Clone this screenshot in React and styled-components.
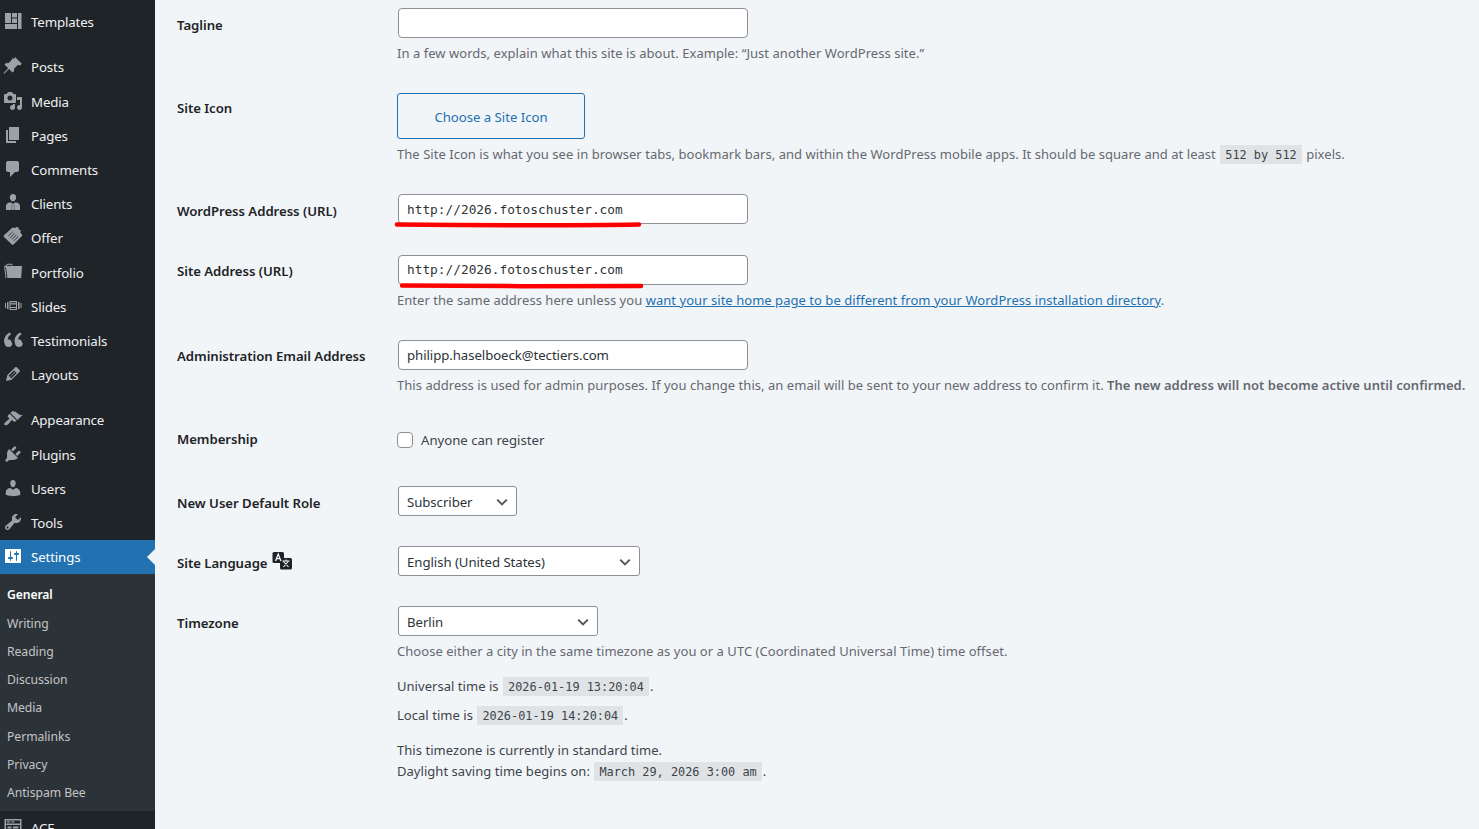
import React from "react";
import styled, { createGlobalStyle } from "styled-components";

const sans = `"Noto Sans", "Open Sans", sans-serif`;
const mono = `"DejaVu Sans Mono", "Liberation Mono", monospace`;

const Global = createGlobalStyle`
  html, body { margin: 0; padding: 0; height: 829px; overflow: hidden; background: #f2f5f8; }
  #root { height: 829px; }
  * { box-sizing: border-box; }
`;

const Page = styled.div`
  display: flex;
  height: 829px;
  overflow: hidden;
  font-family: ${sans};
  font-size: 13px;
  color: #3c434a;
  background: #f2f5f8;
`;

const Sidebar = styled.nav`
  width: 155px;
  flex: none;
  height: 829px;
  overflow: hidden;
  background: #1f2429;
  padding-top: 5px;
`;

const MenuItem = styled.div`
  display: flex;
  align-items: center;
  height: ${(p) => p.$h || 34}px;
  margin-top: ${(p) => p.$mt || 0}px;
  padding-left: 3px;
  gap: 8px;
  font-size: 13.3px;
  letter-spacing: -0.15px;
  position: relative;
  background: ${(p) => (p.$active ? "#2271b1" : "transparent")};
  color: ${(p) => (p.$active ? "#fff" : "#f0f0f1")};
`;

const IconSlot = styled.svg`
  width: 20px;
  height: 20px;
  flex: none;
  margin-bottom: 2px;
  overflow: visible;
  fill: ${(p) => p.$color || "#9ca1a7"};
`;

const Pointer = styled.span`
  position: absolute;
  right: 0;
  top: 9px;
  border: 8px solid transparent;
  border-left-width: 0;
  border-right-color: #f2f5f8;
`;

const SubMenu = styled.div`
  background: #2c3338;
  padding: 5.5px 0 3.5px;
`;

const SubItem = styled.div`
  height: ${(p) => (p.$current ? 30 : 28.3)}px;
  line-height: ${(p) => (p.$current ? 29 : 28.3)}px;
  padding-left: 7px;
  font-size: 12.2px;
  letter-spacing: ${(p) => (p.$current ? "-0.12px" : "-0.05px")};
  color: ${(p) => (p.$current ? "#fff" : "#c3c4c7")};
  font-weight: ${(p) => (p.$current ? 600 : 400)};
`;

const Main = styled.main`
  position: relative;
  flex: 1;
  padding: 8px 0 0 22px;
`;

const Row = styled.div`
  display: grid;
  grid-template-columns: 220px 1fr;
  margin-bottom: ${(p) => (p.$mb === undefined ? 30 : p.$mb)}px;
`;

const Label = styled.div`
  padding-top: ${(p) => (p.$pt === undefined ? 7 : p.$pt)}px;
  font-size: 13.2px;
  line-height: 20px;
  font-weight: 600;
  letter-spacing: -0.05px;
  color: #1d2327;
  display: flex;
  align-items: flex-start;
  gap: 4px;
  white-space: nowrap;
`;

const TextInput = styled.input`
  display: block;
  width: 350px;
  height: 30px;
  margin-left: 1px;
  padding: 0 8px ${(p) => p.$pb || 0}px;
  border: 1px solid #8c8f94;
  border-radius: 4px;
  background: #fff;
  color: #2c3338;
  outline: none;
  font-family: ${(p) => (p.$mono ? mono : sans)};
  font-size: ${(p) => (p.$mono ? "12.8px" : "13.2px")};
  letter-spacing: ${(p) => (p.$mono ? "0" : "-0.06px")};
`;

const Description = styled.p`
  margin: 5px 0 0;
  line-height: 20px;
  font-size: 13px;
  letter-spacing: 0.04px;
  color: #646970;
  white-space: nowrap;
`;

const BodyText = styled.p`
  margin: ${(p) => p.$mt || 0}px 0 0;
  line-height: 20px;
  font-size: 13px;
  letter-spacing: 0.04px;
  color: #3c434a;
  white-space: nowrap;
`;

const Strong = styled.strong`
  font-weight: 600;
`;

const Code = styled.code`
  font-family: ${mono};
  font-size: 11.88px;
  line-height: 1;
  letter-spacing: 0;
  padding: 3px 5px 2px;
  margin: 0 1px;
  background: rgba(0, 0, 0, 0.07);
  color: #3c434a;
`;

const Link = styled.a`
  color: #2271b1;
  text-decoration: underline;
`;

const IconButton = styled.button`
  display: block;
  width: 188px;
  height: 46px;
  padding: 2px 0 0;
  border: 1px solid #2271b1;
  border-radius: 3px;
  background: transparent;
  color: #2271b1;
  font-family: ${sans};
  font-size: 13.2px;
  letter-spacing: -0.03px;
`;

const CheckLine = styled.label`
  display: flex;
  align-items: center;
  gap: 8px;
  height: 20px;
  margin-top: 1px;
  font-size: 13.2px;
  letter-spacing: -0.02px;
  color: #3c434a;
`;

const Box = styled.span`
  width: 16px;
  height: 16px;
  border: 1px solid #8c8f94;
  border-radius: 4px;
  background: #fff;
`;

const SelectBox = styled.div`
  position: relative;
  width: ${(p) => p.$w}px;
  height: 30px;
  margin-left: 1px;
  padding: 0 8px;
  border: 1px solid #8c8f94;
  border-radius: 3px;
  background: #fff;
  font-size: 13.2px;
  letter-spacing: -0.05px;
  line-height: 30px;
  color: #2c3338;
`;

const Chevron = styled.svg`
  position: absolute;
  right: 8px;
  top: 9px;
  width: 12px;
  height: 12px;
  fill: none;
  stroke: #50575e;
  stroke-width: 2;
`;

const Scribble = styled.svg`
  position: absolute;
  left: ${(p) => p.$x}px;
  top: ${(p) => p.$y}px;
  overflow: visible;
  fill: none;
  stroke: #fe0000;
  stroke-width: 4.5;
  stroke-linecap: round;
`;

const TranslationSvg = styled.svg`
  width: 20px;
  height: 20px;
  margin-top: -2px;
  flex: none;
`;

const Line = styled.path`
  fill: none;
  stroke: #f2f5f8;
  stroke-width: ${(p) => p.$w};
`;

const D = {
  posts: "M10.44 3.02l1.82-1.82 6.54 6.54-1.82 1.82c-1.03-.73-1.69-.83-2.47-.19l-2.97 2.97c-.77.79-.72 1.79-.19 2.47l-1.81 1.81-3.61-3.61-3.91 3.92-1.75 1.01 1.01-1.75 3.92-3.91-3.61-3.61 1.82-1.82c.73.55 1.74.58 2.47-.19l2.97-2.97c.6-.73.5-1.44-.18-2.47z",
  media: "M13 11V4c0-.55-.45-1-1-1h-1.67L9 1H5L3.67 3H2c-.55 0-1 .45-1 1v7c0 .55.45 1 1 1h10c.55 0 1-.45 1-1zM7 4.5c1.38 0 2.5 1.12 2.5 2.5S8.38 9.5 7 9.5 4.5 8.38 4.5 7 5.62 4.5 7 4.5zM14 6h5v10.5c0 1.38-1.12 2.5-2.5 2.5S14 17.88 14 16.5s1.12-2.5 2.5-2.5c.17 0 .34.02.5.05V9h-3V6zm-4 8.05V13h2v3.5c0 1.38-1.12 2.5-2.5 2.5S7 17.88 7 16.5 8.12 14 9.5 14c.17 0 .34.02.5.05z",
  pages: "M6 15V2h10v13H6zm-1 1h8v2H3V5h2v11z",
  comments: "M5 2h9c1.1 0 2 .9 2 2v7c0 1.1-.9 2-2 2h-2l-5 5v-5H5c-1.1 0-2-.9-2-2V4c0-1.1.9-2 2-2z",
  clients: "M10 1c1.900 0 3.200 1.400 3.200 3.300 0 2-1.300 4.200-3.200 4.200S6.800 6.300 6.800 4.300C6.800 2.400 8.100 1 10 1zM7.200 9.300l1.900 1-.7 6.700H3v-4c0-2.100 2-3.300 4.200-3.700zM12.800 9.300c2.200.4 4.200 1.600 4.200 3.700v4h-5.400l-.7-6.700zM9.400 10.500h1.200l.4 1-.3.900.6 3.800-1.300 1-1.300-1 .6-3.800-.3-.9z",
  offer: "M9.500.500L12 1l1.500-1 2 .5.300 1.700 2 1.300-.5 2L19 7.500c.4.5.4 1 0 1.500l-8.500 8.500c-.5.5-1.100.5-1.600 0L1 9.900c-.5-.5-.5-1.100 0-1.600zM5.300 8.800l.4.400 4.600-4.600-.4-.4zM7 10.500l.4.400 4.600-4.600-.4-.4zM8.700 12.200l.4.400 4.600-4.600-.4-.4zM10.400 13.900l.4.400 4.600-4.600-.4-.4z",
  portfolio: "M1 3.500L2.500 16h1L2 3.500h.8L4.300 1.800h4.400l1.400 1.700h-1L8 2.800H4.700L3.800 4H19l-.8 12H4.500L3 5.500z",
  slides: "M6.500 5h7.500v9H6.500zM7.500 6.200v1.100h5.500V6.200zM7.500 8.400v2.500h5.500V8.400zM7.500 12v1h5.500v-1zM4 6h1.500v7H4zM15 6h1.500v7H15zM2 7h1v5H2zM17.500 7h1v5h-1z",
  quote: "M8.540 12.740c0-.87-.24-1.610-.72-2.220-.73-.92-2.140-1.030-2.960-.85-.34-1.960 1.300-4.310 3.390-5.380L6.650 2.500C3.450 4.100.71 7.590 1.170 11.890 1.490 14.810 3.010 17 5.600 17c1.140 0 2.060-.37 2.750-1.110.69-.73 1.030-1.650 1.030-2.750zM19 12.740c0-.87-.24-1.610-.72-2.220-.73-.92-2.140-1.030-2.960-.85-.34-1.960 1.300-4.310 3.390-5.380L17.110 2.500C13.910 4.100 11.170 7.590 11.630 11.890 11.950 14.810 13.470 17 16.060 17c1.140 0 2.060-.37 2.750-1.110.69-.73 1.030-1.650 1.030-2.750z",
  layouts: "M13.890 3.390l2.710 2.720c.46.46.42 1.240.03 1.640l-8.010 8.020-5.560 1.160 1.160-5.580s7.600-7.630 7.990-8.030c.39-.39 1.220-.39 1.680.07zm-2.730 2.790l-5.590 5.610 1.110 1.110 5.540-5.650zm-2.970 8.230l5.580-5.600-1.070-1.080-5.590 5.600z",
  appearance: "M14.480 11.060L7.410 3.990l1.500-1.500c.5-.56 2.300-.47 3.510.32 1.210.8 1.430 1.280 2.910 2.100 1.180.64 2.450 1.260 4.450.85zm-.71.71L6.700 4.700 4.930 6.470c-.39.39-.39 1.020 0 1.410l1.060 1.060c.39.39.39 1.030 0 1.420-.6.6-1.430 1.110-2.210 1.690-.35.26-.7.53-1.010.84C1.430 13.230.99 14.900 1.400 16.100c1.200.41 2.870-.03 4.270-1.430.31-.31.58-.66.84-1.010.58-.78 1.090-1.610 1.690-2.210.39-.39 1.030-.39 1.420 0l1.060 1.060c.39.39 1.020.39 1.410 0z",
  plugins: "M13.110 4.360L9.870 7.600 8 5.730l3.240-3.240c.35-.34 1.050-.2 1.560.32.52.51.66 1.210.31 1.550zm-8 1.770l.91-1.120 9.010 9.010-1.190.84c-.71.71-2.630 1.160-3.820 1.160H6.140L4.900 17.260c-.59.59-1.540.59-2.120 0-.59-.58-.59-1.530 0-2.120l1.240-1.240v-3.880c0-1.130.4-3.190 1.090-3.890zm7.260 3.970l3.240-3.240c.34-.35 1.040-.21 1.550.31.52.51.66 1.210.31 1.550l-3.240 3.250z",
  users: "M10 9.250c-2.270 0-2.730-3.440-2.730-3.440C7 4.020 7.820 2 9.970 2c2.160 0 2.980 2.020 2.710 3.810 0 0-.41 3.440-2.680 3.440zm0 2.570L12.720 10c2.390 0 4.520 2.330 4.520 4.530v2.490s-3.650 1.130-7.240 1.130c-3.650 0-7.240-1.130-7.240-1.130v-2.490c0-2.250 1.940-4.480 4.470-4.480z",
  tools: "M16.680 9.770c-1.340 1.340-3.300 1.670-4.950.99l-5.410 6.520c-.99.99-2.590.99-3.580 0s-.99-2.590 0-3.570l6.520-5.420c-.68-1.650-.35-3.610.99-4.950 1.280-1.280 3.120-1.620 4.720-1.060l-2.890 2.890 2.820 2.820 2.860-2.870c.53 1.580.18 3.390-1.080 4.650zM3.810 16.210c.4.39 1.040.39 1.430 0 .4-.4.4-1.040 0-1.430-.39-.4-1.030-.4-1.430 0-.39.39-.39 1.030 0 1.430z",
  settings: "M18 16V4c0-.55-.45-1-1-1H3c-.55 0-1 .45-1 1v12c0 .55.45 1 1 1h14c.55 0 1-.45 1-1zM8 11h1c.55 0 1 .45 1 1s-.45 1-1 1H8v1.500c0 .28-.22.5-.5.5s-.5-.22-.5-.5V13H6c-.55 0-1-.45-1-1s.45-1 1-1h1V5.500c0-.28.22-.5.5-.5s.5.22.5.5V11zm5-2h-1c-.55 0-1-.45-1-1s.45-1 1-1h1V5.500c0-.28.22-.5.5-.5s.5.22.5.5V7h1c.55 0 1 .45 1 1s-.45 1-1 1h-1v5.500c0 .28-.22.5-.5.5s-.5-.22-.5-.5V9z",
  templates: "M2 2h6v10H2zM9 2h5v4.500H9zM9 7.500h5V12H9zM2 13h12v5H2zM15 2h3.500v16H15z",
  acf: "M1.500 2h17v16h-17zM3 3.500v3h14v-3zM4 4.300h3v1.200H4zM8.300 4.300h3v1.200h-3zM3 8v8.500h14V8zM4.500 9.500h4v2h-4zM10 9.500h5.500v2H10zM4.500 13h4v2h-4zM10 13h5.500v2H10z",
};

const Icon = ({ name, color }) => (
  <IconSlot viewBox="0 0 20 20" $color={color}>
    <path d={D[name]} fillRule="evenodd" />
  </IconSlot>
);

const TranslationIcon = () => (
  <TranslationSvg viewBox="0 0 20 20">
    <rect x="0.500" y="1" width="11.500" height="11" rx="1.500" fill="#1d2327" />
    <rect x="8" y="7" width="12" height="11.500" rx="1.500" fill="#1d2327" />
    <Line $w={1.3} d="M3.500 10l2.700-7 2.700 7M4.500 7.700h3.400" />
    <Line $w={1.1} d="M10.500 10h7M14 8.500v1.500M11.500 16l5-6M11.500 10.500l5 5.500" />
  </TranslationSvg>
);

const Caret = () => (
  <Chevron viewBox="0 0 12 12">
    <path d="M1.200 3.600L6 8.400l4.800-4.800" />
  </Chevron>
);

const menuTop = [["templates", "Templates", 34, 0]];
const menuA = [
  ["posts", "Posts", 35, 10],
  ["media", "Media", 34, 1],
  ["pages", "Pages", 34],
  ["comments", "Comments", 34],
  ["clients", "Clients", 34],
  ["offer", "Offer", 34],
  ["portfolio", "Portfolio", 35],
  ["slides", "Slides", 34],
  ["quote", "Testimonials", 34],
  ["layouts", "Layouts", 34],
];
const menuB = [
  ["appearance", "Appearance", 35, 10],
  ["plugins", "Plugins", 34, 1],
  ["users", "Users", 34],
  ["tools", "Tools", 34],
];
const subs = ["General", "Writing", "Reading", "Discussion", "Media", "Permalinks", "Privacy", "Antispam Bee"];

export default function App() {
  const renderItems = (items) =>
    items.map(([icon, text, h, mt]) => (
      <MenuItem key={text} $h={h} $mt={mt}>
        <Icon name={icon} />
        {text}
      </MenuItem>
    ));
  return (
    <Page>
      <Global />
      <Sidebar>
        {renderItems(menuTop)}
        {renderItems(menuA)}
        {renderItems(menuB)}
        <MenuItem $active>
          <Icon name="settings" color="#fff" />
          Settings
          <Pointer />
        </MenuItem>
        <SubMenu>
          {subs.map((s, i) => (
            <SubItem key={s} $current={i === 0}>{s}</SubItem>
          ))}
        </SubMenu>
        <MenuItem>
          <Icon name="acf" />
          ACF
        </MenuItem>
      </Sidebar>
      <Main>
        <Row>
          <Label>Tagline</Label>
          <div>
            <TextInput readOnly value="" />
            <Description>In a few words, explain what this site is about. Example: “Just another WordPress site.”</Description>
          </div>
        </Row>
        <Row>
          <Label $pt={5}>Site Icon</Label>
          <div>
            <IconButton>Choose a Site Icon</IconButton>
            <Description>
              The Site Icon is what you see in browser tabs, bookmark bars, and within the WordPress mobile apps. It should be square and at least <Code>512 by 512</Code> pixels.
            </Description>
          </div>
        </Row>
        <Row $mb={31}>
          <Label>WordPress Address (URL)</Label>
          <TextInput $mono readOnly value="http://2026.fotoschuster.com" />
        </Row>
        <Row>
          <Label $pt={6}>Site Address (URL)</Label>
          <div>
            <TextInput $mono $pb={2} readOnly value="http://2026.fotoschuster.com" />
            <Description>
              Enter the same address here unless you <Link>want your site home page to be different from your WordPress installation directory</Link>.
            </Description>
          </div>
        </Row>
        <Row $mb={34}>
          <Label $pt={6}>Administration Email Address</Label>
          <div>
            <TextInput readOnly value="philipp.haselboeck@tectiers.com" />
            <Description>
              This address is used for admin purposes. If you change this, an email will be sent to your new address to confirm it. <Strong>The new address will not become active until confirmed.</Strong>
            </Description>
          </div>
        </Row>
        <Row $mb={36}>
          <Label $pt={0}>Membership</Label>
          <CheckLine><Box />Anyone can register</CheckLine>
        </Row>
        <Row>
          <Label>New User Default Role</Label>
          <SelectBox $w={119}>Subscriber<Caret /></SelectBox>
        </Row>
        <Row>
          <Label>Site Language <TranslationIcon /></Label>
          <SelectBox $w={242}>English (United States)<Caret /></SelectBox>
        </Row>
        <Row $mb={0}>
          <Label>Timezone</Label>
          <div>
            <SelectBox $w={200}>Berlin<Caret /></SelectBox>
            <Description>Choose either a city in the same timezone as you or a UTC (Coordinated Universal Time) time offset.</Description>
            <BodyText $mt={15}>Universal time is <Code>2026-01-19 13:20:04</Code>.</BodyText>
            <BodyText $mt={9}>Local time is <Code>2026-01-19 14:20:04</Code>.</BodyText>
            <BodyText $mt={15}>This timezone is currently in standard time.</BodyText>
            <BodyText $mt={1}>Daylight saving time begins on: <Code>March 29, 2026 3:00 am</Code>.</BodyText>
          </div>
        </Row>
        <Scribble $x={241} $y={222} width="245" height="5" viewBox="0 0 245 5">
          <path d="M1 2.500C60 3 180 3.500 243 2.500" />
        </Scribble>
        <Scribble $x={246} $y={283} width="244" height="5" viewBox="0 0 244 5">
          <path d="M1 2.500C60 3 180 3.500 240 3" />
        </Scribble>
      </Main>
    </Page>
  );
}
